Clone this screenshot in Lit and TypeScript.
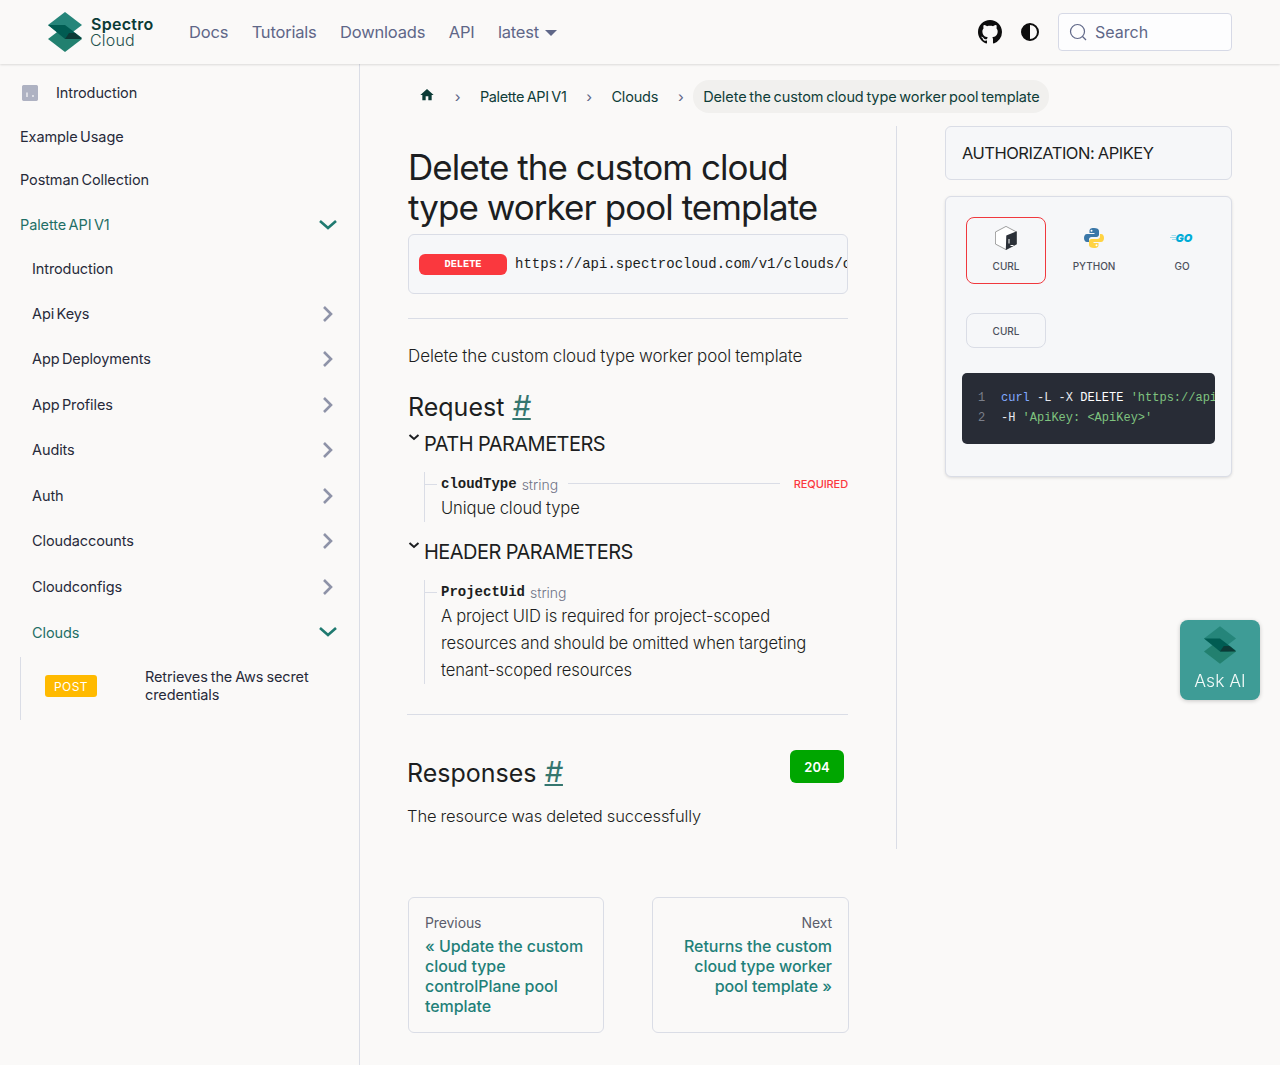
import { css, html, LitElement, nothing, svg } from 'lit';
import { customElement } from 'lit/decorators.js';

interface NavRow {
  label: string;
  height: number;
  chevron?: 'right' | 'down';
  active?: boolean;
  up?: boolean;
}

const TOP_ROWS: NavRow[] = [
  { label: 'Example Usage', height: 43 },
  { label: 'Postman Collection', height: 44, up: true },
  { label: 'Palette API V1', height: 45, chevron: 'down', active: true },
];

const SUB_ROWS: NavRow[] = [
  { label: 'Introduction', height: 44, up: true },
  { label: 'Api Keys', height: 45, chevron: 'right' },
  { label: 'App Deployments', height: 46, chevron: 'right', up: true },
  { label: 'App Profiles', height: 45, chevron: 'right' },
  { label: 'Audits', height: 46, chevron: 'right', up: true },
  { label: 'Auth', height: 45, chevron: 'right' },
  { label: 'Cloudaccounts', height: 46, chevron: 'right', up: true },
  { label: 'Cloudconfigs', height: 45, chevron: 'right' },
  { label: 'Clouds', height: 46, chevron: 'down', active: true },
];

const logoMark = (w: number, h: number) => html`
  <svg width=${w} height=${h} viewBox="0 0 34 40">
    <path d="M17 14 34 27 17 40 0 27Z" fill="#22806f" />
    <path d="M17 0 34 13 17 26 0 13Z" fill="#25857a" />
    <path d="M0 13H17L34 26 25 27H17Z" fill="#005c52" />
    <path d="M17 27H34L27 21 21 21Z" fill="#0d3a36" />
  </svg>
`;

const chevronDown = svg`<path d="M1 5 9 12 17 5" fill="none" stroke="#1f7a70" stroke-width="2.6" />`;
const chevronRight = svg`<path d="M5 2 12 9 5 16" fill="none" stroke="#8e93a8" stroke-width="2.6" />`;

@customElement('app-root')
export class AppRoot extends LitElement {
  static override styles = css`
    :host {
      display: block;
      min-height: 1065px;
      background: #faf9f8;
      color: #1c1e21;
      font-family: Inter, 'Noto Sans', sans-serif;
      font-size: 15px;
      overflow: hidden;
    }

    .mono {
      font-family: 'Liberation Mono', monospace;
    }

    /* header */
    .top {
      display: flex;
      align-items: center;
      height: 64px;
      padding: 0 48px;
      box-shadow: 0 1px 2px rgba(0, 0, 0, 0.12);
      position: relative;
    }

    .brand {
      display: flex;
      align-items: center;
      gap: 8px;
      width: 141px;
    }

    .brand-text {
      color: #0b3b36;
      line-height: 16px;
      font-size: 16px;
    }

    .brand-text b {
      display: block;
      font-weight: 600;
      letter-spacing: 0.3px;
      margin-left: 1px;
    }

    .brand-text span {
      display: block;
      font-weight: 300;
      color: #24504c;
      font-size: 16px;
      letter-spacing: 0.2px;
    }

    .links {
      display: flex;
      gap: 23.5px;
      color: #5f6788;
      font-size: 16.5px;
      letter-spacing: -0.2px;
    }

    .caret {
      display: inline-block;
      border: 6px solid transparent;
      border-top-color: #5f6788;
      border-bottom: 0;
      margin-left: 6px;
      vertical-align: 2px;
    }

    .tools {
      margin-left: auto;
      display: flex;
      align-items: center;
    }

    .gh,
    .mode {
      margin-right: 19px;
      display: block;
    }

    .search {
      width: 174px;
      height: 38px;
      box-sizing: border-box;
      border: 1px solid #d6d9e6;
      border-radius: 4px;
      background: #fdfdfe;
      display: flex;
      align-items: center;
      gap: 8px;
      padding-left: 10px;
      color: #5f6788;
      font-size: 16px;
    }

    /* body */
    .page {
      display: flex;
    }

    .side {
      width: 359px;
      min-height: 1000px;
      border-right: 1px solid #dadde6;
      padding-top: 7px;
      flex: none;
    }

    .row {
      display: flex;
      align-items: center;
      justify-content: space-between;
      padding: 0 20px;
      color: #272a3a;
      font-size: 14.5px;
      letter-spacing: -0.1px;
      word-spacing: -1.5px;
    }

    .row.sub {
      padding-left: 32px;
    }

    .row.active {
      color: #1f6f66;
    }

    .row svg {
      margin-right: 2px;
    }

    .up {
      margin-bottom: 1px;
    }

    .intro {
      height: 44px;
      display: flex;
      align-items: center;
      padding-left: 22px;
      gap: 18px;
      color: #272a3a;
      font-size: 14.5px;
      letter-spacing: -0.1px;
    }

    .intro-icon {
      width: 16px;
      height: 16px;
      border-radius: 2px;
      background: #aeb2c2;
      display: block;
    }

    .endpoint {
      margin-left: 20px;
      border-left: 1px solid #dadde6;
      height: 58px;
      display: flex;
      align-items: center;
      padding: 0 0 5px 24px;
      margin-top: 2px;
    }

    .post {
      width: 52px;
      height: 22px;
      border-radius: 3px;
      background: #ffba00;
      color: #fff;
      font-size: 12px;
      letter-spacing: 0.4px;
      display: flex;
      align-items: center;
      justify-content: center;
      margin-right: 48px;
      flex: none;
    }

    .endpoint-label {
      width: 180px;
      font-size: 14.5px;
      line-height: 18px;
      color: #272a3a;
      letter-spacing: -0.1px;
      word-spacing: -1px;
    }

    .main {
      flex: 1;
      padding: 16px 48px 0;
    }

    .crumbs {
      display: flex;
      align-items: center;
      height: 33px;
      color: #0f3d38;
      font-size: 14.5px;
      letter-spacing: -0.2px;
      word-spacing: -1px;
    }

    .crumbs svg {
      display: block;
    }

    .crumb {
      padding: 0 9px;
    }

    .crumb.palette {
      letter-spacing: -0.4px;
    }

    .crumb.home {
      padding: 0 0 0 11px;
      margin: -4px 9px 0 0;
    }

    .crumb.now {
      background: #f1f0ee;
      border-radius: 16px;
      height: 33px;
      display: flex;
      align-items: center;
      padding: 0 9px 0 10px;
      margin-left: -1px;
      letter-spacing: -0.1px;
      word-spacing: -1.2px;
      white-space: pre;
    }

    .sep {
      color: #5f6788;
      width: 27px;
      text-align: center;
      font-size: 17px;
      font-family: 'Liberation Sans', sans-serif;
    }

    .columns {
      display: grid;
      grid-template-columns: 489px 287px;
      column-gap: 48px;
      margin-top: 13px;
    }

    .doc {
      padding-right: 48px;
      border-right: 1px solid #dadde6;
      height: 723px;
      width: 440px;
    }

    h1 {
      margin: 21px 0 7px;
      font-size: 35px;
      line-height: 40px;
      font-weight: 400;
      letter-spacing: -0.95px;
    }

    .url {
      height: 58px;
      border: 1px solid #dadde6;
      border-radius: 6px;
      background: #f6f7f9;
      display: flex;
      align-items: center;
      padding-left: 10px;
      overflow: hidden;
    }

    .method {
      width: 88px;
      height: 21px;
      border-radius: 6px;
      background: #fa383e;
      color: #fff;
      font-weight: 700;
      font-size: 10.3px;
      display: flex;
      align-items: center;
      justify-content: center;
      flex: none;
      margin-right: 8px;
    }

    .url .path {
      font-size: 14px;
      white-space: nowrap;
      color: #1c1e21;
    }

    hr {
      border: 0;
      border-top: 1px solid #dadde6;
      margin: 24px 0 0;
    }

    .lead {
      margin: 26px 0 0;
      font-size: 17px;
      line-height: 22px;
      font-weight: 300;
      letter-spacing: -0.1px;
      word-spacing: -0.5px;
    }

    h2 {
      margin: 0;
      font-size: 25px;
      line-height: 34px;
      font-weight: 400;
    }

    h2.request {
      margin-top: 22px;
    }

    h2 a {
      color: #35766f;
      text-decoration: underline;
      margin-left: 1px;
      font-size: 29px;
      font-style: italic;
    }

    .group {
      display: flex;
      align-items: center;
      font-size: 20px;
      line-height: 28px;
      letter-spacing: -0.55px;
      margin-top: 6px;
      position: relative;
      padding-left: 16px;
    }

    .group.next {
      margin-top: 16px;
    }

    .group svg {
      position: absolute;
      left: 0;
      top: 2px;
    }

    .params {
      margin: 14px 0 0 16px;
      border-left: 1px solid #dadde6;
      padding-left: 16px;
    }

    .param-head {
      display: flex;
      align-items: center;
      height: 24px;
      position: relative;
    }

    .param-head::before {
      content: '';
      position: absolute;
      left: -16px;
      top: 12px;
      width: 12px;
      border-top: 1px solid #dadde6;
    }

    .param-name {
      font-weight: 700;
      font-size: 14px;
    }

    .param-type {
      color: #6f7386;
      font-size: 14px;
      font-weight: 300;
      margin-left: 5px;
    }

    .param-line {
      flex: 1;
      border-top: 1px solid #dadde6;
      margin: -2px 14px 0 10px;
    }

    .required {
      color: #fa383e;
      font-size: 11px;
      font-weight: 500;
      letter-spacing: -0.1px;
      margin-top: -1px;
    }

    .param-desc {
      font-size: 16.6px;
      line-height: 27px;
      font-weight: 300;
      letter-spacing: -0.1px;
      word-spacing: -0.5px;
      margin-top: -1px;
    }

    .rule-wide {
      margin: 30px 0 0 -1px;
    }

    .responses {
      display: flex;
      justify-content: space-between;
      margin: 35px 4px 0 -1px;
      height: 48px;
    }

    .responses h2 {
      margin-top: 5px;
    }

    .code-204 {
      width: 54px;
      height: 33px;
      background: #00a600;
      color: #fff;
      border-radius: 6px;
      font-size: 13px;
      font-weight: 600;
      display: flex;
      align-items: center;
      justify-content: center;
    }

    .resp-text {
      margin: 7px 0 0 -1px;
      font-size: 16.5px;
      line-height: 22px;
      font-weight: 300;
      letter-spacing: -0.1px;
      word-spacing: -0.5px;
    }

    .auth {
      height: 52px;
      border: 1px solid #dadde6;
      border-radius: 6px;
      background: #f6f7f9;
      display: flex;
      align-items: center;
      padding-left: 16px;
      font-size: 16.5px;
      letter-spacing: -0.5px;
      word-spacing: -0.5px;
    }

    .samples {
      margin-top: 16px;
      height: 281px;
      box-sizing: border-box;
      border: 1px solid #dadde6;
      border-radius: 6px;
      background: #f6f7f9;
      box-shadow: 0 1px 3px rgba(0, 0, 0, 0.12);
      padding: 20px 16px 0;
    }

    .langs {
      display: flex;
      gap: 8px;
      padding-left: 4px;
    }

    .lang {
      width: 80px;
      height: 67px;
      box-sizing: border-box;
      flex: none;
      border: 1px solid transparent;
      border-radius: 8px;
      display: flex;
      flex-direction: column;
      align-items: center;
      color: #4d505c;
      font-size: 10px;
      font-weight: 500;
    }

    .lang.on {
      border-color: #f0383e;
    }

    .lang-icon {
      height: 26px;
      margin-top: 7px;
      margin-bottom: 9px;
      display: flex;
      align-items: center;
    }

    .tab {
      margin: 29px 0 0 4px;
      width: 80px;
      height: 35px;
      box-sizing: border-box;
      border: 1px solid #dadde6;
      border-radius: 8px;
      display: flex;
      align-items: center;
      justify-content: center;
      color: #4d505c;
      font-size: 10px;
      font-weight: 500;
    }

    .code {
      margin-top: 25px;
      height: 71px;
      background: #282c36;
      border-radius: 5px;
      overflow: hidden;
      padding-top: 15px;
      box-sizing: border-box;
      font-size: 12px;
      line-height: 20px;
      color: #e6e8ee;
      white-space: pre;
    }

    .ln {
      color: #7b7f8a;
      display: inline-block;
      width: 39px;
      padding-left: 16px;
      box-sizing: border-box;
    }

    .kw {
      color: #82aaff;
    }

    .str {
      color: #7fc37f;
    }

    .del {
      color: #fff;
    }

    .pager {
      display: flex;
      gap: 48px;
      margin-top: 48px;
    }

    .card {
      width: 196px;
      height: 136px;
      box-sizing: border-box;
      border: 1px solid #dadde6;
      border-radius: 6px;
      padding: 15px 16px;
      flex: none;
    }

    .card.next {
      width: 197px;
      text-align: right;
    }

    .card small {
      display: block;
      color: #5a5d6b;
      font-size: 14px;
      line-height: 20px;
      letter-spacing: -0.1px;
      margin-bottom: 3px;
    }

    .card a {
      display: block;
      color: #1f8079;
      font-size: 16px;
      line-height: 20px;
      font-weight: 500;
      letter-spacing: -0.05px;
    }

    .ask {
      position: fixed;
      left: 1180px;
      top: 620px;
      width: 80px;
      height: 80px;
      border-radius: 8px;
      background: #3e9c96;
      box-shadow: 0 1px 4px rgba(0, 0, 0, 0.2);
      color: #f2faf8;
      font-size: 17.5px;
      font-weight: 300;
      text-align: center;
    }

    .ask svg {
      display: block;
      margin: 6px auto;
    }
  `;

  private navRow(row: NavRow, sub: boolean) {
    return html`
      <div
        class="row ${sub ? 'sub' : ''} ${row.active ? 'active' : ''}"
        style="height:${row.height}px"
      >
        <span class=${row.up ? 'up' : ''}>${row.label}</span>
        ${row.chevron
          ? html`<svg width="18" height="18" viewBox="0 0 18 18">
              ${row.chevron === 'down' ? chevronDown : chevronRight}
            </svg>`
          : nothing}
      </div>
    `;
  }

  private header() {
    return html`
      <header class="top">
        <div class="brand">
          ${logoMark(34, 40)}
          <div class="brand-text"><b>Spectro</b><span>Cloud</span></div>
        </div>
        <nav class="links">
          <span>Docs</span><span>Tutorials</span><span>Downloads</span><span>API</span>
          <span>latest<i class="caret"></i></span>
        </nav>
        <div class="tools">
          <svg class="gh" width="24" height="24" viewBox="0 0 16 16">
            <path
              fill="#0d0d0d"
              d="M8 0C3.58 0 0 3.58 0 8c0 3.54 2.29 6.53 5.47 7.59.4.07.55-.17.55-.38 0-.19-.01-.82-.01-1.49-2.01.37-2.53-.49-2.69-.94-.09-.23-.48-.94-.82-1.13-.28-.15-.68-.52-.01-.53.63-.01 1.08.58 1.23.82.72 1.21 1.87.87 2.33.66.07-.52.28-.87.51-1.07-1.78-.2-3.64-.89-3.64-3.95 0-.87.31-1.59.82-2.15-.08-.2-.36-1.02.08-2.12 0 0 .67-.21 2.2.82.64-.18 1.32-.27 2-.27s1.36.09 2 .27c1.53-1.04 2.2-.82 2.2-.82.44 1.1.16 1.92.08 2.12.51.56.82 1.27.82 2.15 0 3.07-1.87 3.75-3.65 3.95.29.25.54.73.54 1.48 0 1.07-.01 1.93-.01 2.2 0 .21.15.46.55.38A8.01 8.01 0 0 0 16 8c0-4.42-3.58-8-8-8Z"
            />
          </svg>
          <svg class="mode" width="18" height="18" viewBox="0 0 18 18">
            <circle cx="9" cy="9" r="8" fill="none" stroke="#0d0d0d" stroke-width="2" />
            <path d="M9 1a8 8 0 0 0 0 16Z" fill="#0d0d0d" />
          </svg>
          <label class="search">
            <svg width="18" height="18" viewBox="0 0 18 18" fill="none" stroke="#5f6788" stroke-width="1.2">
              <circle cx="8.5" cy="8.5" r="7" />
              <path d="M13.5 13.5 17 17" />
            </svg>
            <span>Search</span>
          </label>
        </div>
      </header>
    `;
  }

  private sidebar() {
    return html`
      <aside class="side">
        <div class="intro">
          <svg class="intro-icon" viewBox="0 0 16 16">
            <rect width="16" height="16" rx="2" fill="#aeb2c2" />
            <path d="M5 7.5V12M11 10v2" stroke="#f4f4f6" stroke-width="1.3" />
          </svg>
          <span class="up">Introduction</span>
        </div>
        ${TOP_ROWS.map((r) => this.navRow(r, false))} ${SUB_ROWS.map((r) => this.navRow(r, true))}
        <div class="endpoint">
          <span class="post">POST</span>
          <span class="endpoint-label">Retrieves the Aws secret credentials</span>
        </div>
      </aside>
    `;
  }

  private groupChevron() {
    return html`<svg width="12" height="12" viewBox="0 0 12 12">
      <path d="M1.5 3 6 7 10.5 3" fill="none" stroke="#1c1e21" stroke-width="2" />
    </svg>`;
  }

  private doc() {
    return html`
      <section class="doc">
        <h1>Delete the custom cloud type worker pool template</h1>
        <div class="url">
          <span class="method mono">DELETE</span>
          <span class="path mono">https://api.spectrocloud.com/v1/clouds/cloudType/workerPool</span>
        </div>
        <hr />
        <p class="lead">Delete the custom cloud type worker pool template</p>
        <h2 class="request">Request <a>#</a></h2>
        <div class="group">${this.groupChevron()}PATH PARAMETERS</div>
        <div class="params">
          <div class="param-head">
            <span class="param-name mono">cloudType</span>
            <span class="param-type">string</span>
            <span class="param-line"></span>
            <span class="required">REQUIRED</span>
          </div>
          <div class="param-desc">Unique cloud type</div>
        </div>
        <div class="group next">${this.groupChevron()}HEADER PARAMETERS</div>
        <div class="params">
          <div class="param-head">
            <span class="param-name mono">ProjectUid</span>
            <span class="param-type">string</span>
          </div>
          <div class="param-desc">
            A project UID is required for project-scoped resources and should be omitted when
            targeting tenant-scoped resources
          </div>
        </div>
        <hr class="rule-wide" />
        <div class="responses">
          <h2>Responses <a>#</a></h2>
          <span class="code-204">204</span>
        </div>
        <p class="resp-text">The resource was deleted successfully</p>
      </section>
    `;
  }

  private samples() {
    return html`
      <aside class="right">
        <div class="auth">AUTHORIZATION: APIKEY</div>
        <div class="samples">
          <div class="langs">
            <div class="lang on">
              <div class="lang-icon">
                <svg width="22" height="24" viewBox="0 0 22 24">
                  <path d="M11 .4 21.600 6V18L11 23.600 .4 18V6Z" fill="#fff" stroke="#777" stroke-width="0.7" />
                  <path d="M11.300 9.500 21.700 5.200V18.200L10.800 24Z" fill="#2b3038" />
                  <path d="M14 13v4.500M15.500 19.500h3" stroke="#fff" stroke-width="1" />
                </svg>
              </div>
              CURL
            </div>
            <div class="lang">
              <div class="lang-icon">
                <svg width="22" height="22" viewBox="0 0 22 22">
                  <path d="M11 1C7 1 6.500 2.500 6.500 4V6H11.500V7H4C2 7 1 9 1 11S2 15 4 15H6V12.500C6 11 7 10 8.500 10H13.500C15 10 16 9 16 7.500V4C16 2 14 1 11 1Z" fill="#3a77a8" />
                  <path d="M11 21C15 21 15.500 19.500 15.500 18V16H10.500V15H18C20 15 21 13 21 11S20 7 18 7H17V9.500C17 11 16 12 14.500 12H8.500C7 12 6 13 6 14.500V18C6 20 8 21 11 21Z" fill="#ffd343" />
                  <circle cx="8.500" cy="3.700" r="1" fill="#fff" />
                  <circle cx="13.500" cy="18.300" r="1" fill="#fff" />
                </svg>
              </div>
              PYTHON
            </div>
            <div class="lang">
              <div class="lang-icon">
                <svg width="24" height="12" viewBox="0 0 24 12">
                  <path d="M0 5.500H6M1.500 3.500H6M2 7.500H6" stroke="#9fdcec" stroke-width="1" />
                  <text
                    x="5.500"
                    y="10"
                    font-family="Inter, sans-serif"
                    font-size="11"
                    font-weight="900"
                    font-style="italic"
                    fill="#00acd7"
                  >GO</text>
                </svg>
              </div>
              GO
            </div>
          </div>
          <div class="tab">CURL</div>
          <div class="code mono"><span class="ln">1</span><span class="kw">curl</span> -L -X <span class="del">DELETE</span> <span class="str">'https://api.spectrocloud.com'</span>
<span class="ln">2</span>-H <span class="str">'ApiKey: &lt;ApiKey&gt;'</span></div>
        </div>
      </aside>
    `;
  }

  override render() {
    return html`
      ${this.header()}
      <div class="page">
        ${this.sidebar()}
        <main class="main">
          <div class="crumbs">
            <span class="crumb home">
              <svg width="16" height="16" viewBox="0 0 24 24">
                <path d="M10 20v-6h4v6h5v-8h3L12 3 2 12h3v8Z" fill="#0b3b36" />
              </svg>
            </span>
            <span class="sep">›</span>
            <span class="crumb palette">Palette API V1</span>
            <span class="sep">›</span>
            <span class="crumb">Clouds</span>
            <span class="sep">›</span>
            <span class="crumb now">Delete the custom cloud type worker pool template</span>
          </div>
          <div class="columns">${this.doc()} ${this.samples()}</div>
          <div class="pager">
            <div class="card">
              <small>Previous</small>
              <a>« Update the custom cloud type controlPlane pool template</a>
            </div>
            <div class="card next">
              <small>Next</small>
              <a>Returns the custom cloud type worker pool template »</a>
            </div>
          </div>
        </main>
      </div>
      <div class="ask">${logoMark(32, 38)}Ask AI</div>
    `;
  }
}
